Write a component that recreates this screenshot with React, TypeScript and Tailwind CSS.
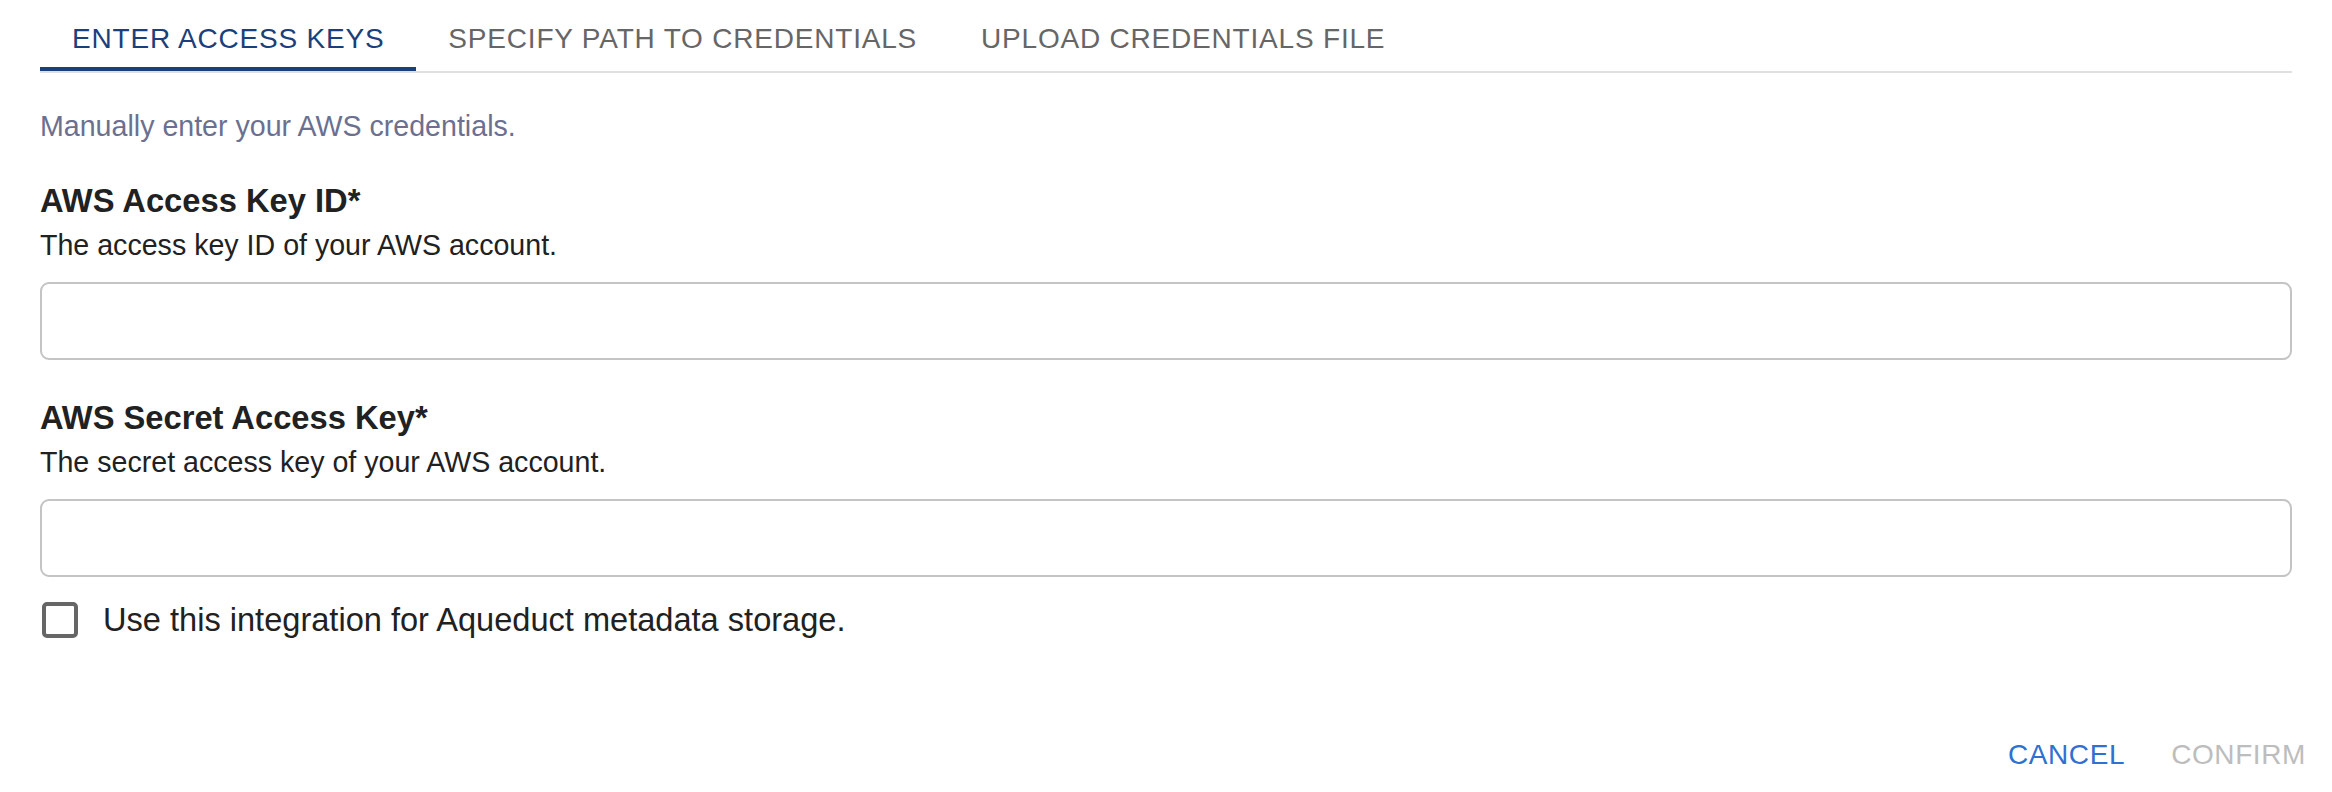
export default function App() {
  const tabs = ["Enter Access Keys", "Specify Path to Credentials", "Upload Credentials File"];

  return (
    <div className="h-[792px] w-full bg-white font-['Liberation_Sans',Arial,sans-serif]">
      <div className="px-[40px]">
        <div className="flex border-b-2 border-[#e0e0e0]">
          {tabs.map((tab, i) => (
            <button
              key={tab}
              className={
                i === 0
                  ? "relative h-[71px] px-[32px] pt-[6px] text-left text-[28px] leading-[34px] tracking-[0.8px] uppercase self-start text-[#1b3f7b]"
                  : "relative h-[71px] px-[32px] pt-[6px] text-left text-[28px] leading-[34px] tracking-[0.8px] uppercase self-start text-[#666666]"
              }
            >
              {tab}
              {i === 0 && (
                <span className="absolute bottom-0 left-0 h-[4px] w-full bg-[#1b3f7b]" />
              )}
            </button>
          ))}
        </div>

        <p className="mt-[33px] text-[28.6px] leading-[40px] text-[#6b7090]">
          Manually enter your AWS credentials.
        </p>

        <Field
          className="mt-[35px]"
          label="AWS Access Key ID*"
          description="The access key ID of your AWS account."
        />
        <Field
          className="mt-[38px]"
          label="AWS Secret Access Key*"
          description="The secret access key of your AWS account."
        />

        <label className="mt-[23px] flex h-[40px] items-center gap-[25px]">
          <span className="ml-[2px] h-[36px] w-[36px] rounded-[5px] border-[4px] border-[#666666]" />
          <span className="text-[32.6px] leading-[40px] text-[#212121]">
            Use this integration for Aqueduct metadata storage.
          </span>
        </label>
      </div>

      <div className="mt-[85px] flex justify-end gap-[14px] pr-[10px]">
        <button className="px-[16px] py-[10px] text-[28px] leading-[40px] tracking-[0.6px] text-[#3070d0]">
          CANCEL
        </button>
        <button className="px-[16px] py-[10px] text-[28px] leading-[40px] tracking-[0.6px] text-[#bdbdbd]">
          CONFIRM
        </button>
      </div>
    </div>
  );
}

function Field({
  label,
  description,
  className,
}: {
  label: string;
  description: string;
  className: string;
}) {
  return (
    <div className={className}>
      <h3 className="text-[32.7px] font-bold leading-[40px] text-[#212121]">{label}</h3>
      <p className="mt-[4px] text-[28.6px] leading-[40px] text-[#212121]">{description}</p>
      <input className="mt-[17px] block h-[78px] w-full rounded-[9px] border-2 border-[#c4c4c4] px-[28px] text-[32px] outline-none" />
    </div>
  );
}
